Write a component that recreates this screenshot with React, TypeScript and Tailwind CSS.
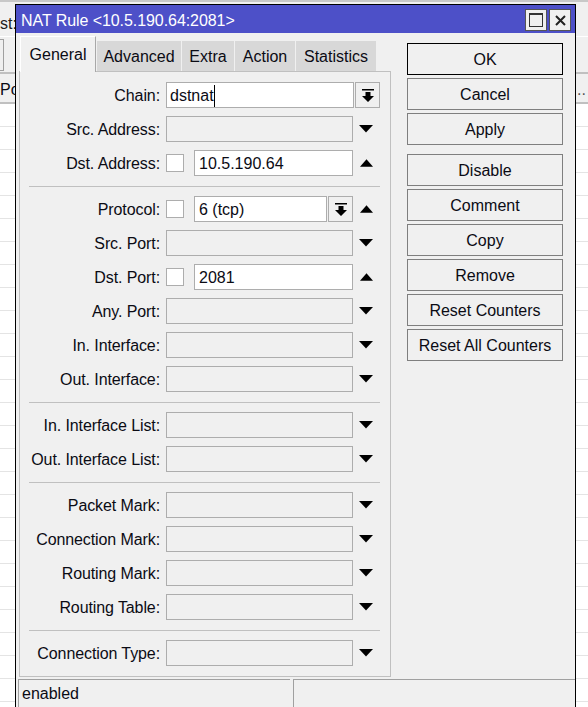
const FONT = "font-['Liberation_Sans',Arial,sans-serif]";

function Down() {
  return (
    <svg width="14" height="8" viewBox="0 0 14 8" className="block">
      <path d="M0 0H14L7 7.5Z" fill="#000" />
    </svg>
  );
}
function Up() {
  return (
    <svg width="14" height="8" viewBox="0 0 14 8" className="block ml-[2px]">
      <path d="M7 0L14 8H0Z" fill="#000" />
    </svg>
  );
}
function DropBtn({ w }: { w: string }) {
  return (
    <div className={`${w} h-[26px] border border-[#adadad] bg-[#f0f0f0] flex items-center justify-center shrink-0`}>
      <svg width="12" height="13" viewBox="0 0 12 13" className="block">
        <path d="M0 0H12V1.5H0Z M3.5 3H8.5V7H12L6 13L0 7H3.5Z" fill="#000" />
      </svg>
    </div>
  );
}

function Label({ text }: { text: string }) {
  return <div className="w-[140px] text-right shrink-0 leading-none pt-[1px] tracking-[-0.1px] whitespace-nowrap">{text}</div>;
}

type RowT = { label: string; check?: boolean; value?: string; up?: boolean };

function Row({ label, check, value, up }: RowT) {
  return (
    <div className="flex h-[26px] items-center">
      <Label text={label} />
      <div className="w-[6px] shrink-0" />
      {check && <div className="w-[18px] h-[18px] border border-[#adadad] bg-white shrink-0 mr-[10px]" />}
      {value !== undefined ? (
        <div className={`${check ? "w-[159px]" : "w-[187px]"} h-[26px] border border-[#adadad] bg-white flex items-center pl-[4px] pt-[2px] shrink-0`}>
          {value}
        </div>
      ) : (
        <div className="w-[187px] h-[26px] border border-[#adadad] bg-[#f0f0f0] shrink-0" />
      )}
      <div className="ml-[5px] w-[15px] flex justify-center shrink-0">{up ? <Up /> : <Down />}</div>
    </div>
  );
}

function Sep() {
  return <div className="h-px bg-[#c0c0c0] ml-[9px] mr-[10px] mt-[10px] mb-[9px]" />;
}

function Btn({ label, primary }: { label: string; primary?: boolean }) {
  return (
    <div className={`h-[32px] border ${primary ? "border-black" : "border-[#7f7f7f]"} bg-[#f0f0f0] flex items-center justify-center pt-[2px]`}>
      {label}
    </div>
  );
}

function Tab({ label, w, active }: { label: string; w: string; active?: boolean }) {
  return active ? (
    <div className={`${w} h-[36px] bg-[#f0f0f0] border-t border-l border-white border-r-[#a8a8a8] flex items-start justify-center pt-[6px] relative z-10 -mb-px border-r`}>
      {label}
    </div>
  ) : (
    <div className={`${w} h-[30px] bg-[#d8d8d8] flex items-center justify-center pt-[2px]`}>{label}</div>
  );
}

const BG_ROWS = Array.from({ length: 27 });

export default function App() {
  return (
    <div className={`${FONT} relative w-[588px] h-[707px] overflow-hidden bg-white text-[16px] text-[#0b0b14]`}>
      <div className="h-[104px] bg-[#f0f0f0] border-t-[2px] border-[#c8c8c8] flex flex-col">
        <div className="h-[36px] border-b border-white flex items-center">
          <span className="pt-[10px] text-[#202020]">st:</span>
        </div>
        <div className="h-[39px] flex items-center">
          <div className="w-[4px] h-[32px] border border-l-0 border-[#a0a0a0] bg-[#f0f0f0]" />
        </div>
        <div className="flex-1 border-t-2 border-b-2 border-[#c0c0c0] flex justify-between items-center pt-[4px]">
          <span>Po</span>
          <span className="mr-[2px] text-[#555]">..</span>
        </div>
      </div>
      <div className="flex flex-col">
        {BG_ROWS.map((_, i) => (
          <div key={i} className="h-[23px] border-b border-[#e4e4e4]" />
        ))}
      </div>

      <div className="absolute left-[15px] top-[4px] w-[561px] h-[720px] border border-black bg-[#f0f0f0]">
        <div className="h-[28px] bg-[#4d50c8] flex items-center justify-between pl-[5px] pr-[4px]">
          <span className="text-white text-[16px] pt-[4px] tracking-[-0.07px]">NAT Rule &lt;10.5.190.64:2081&gt;</span>
          <div className="flex gap-[2px] mt-[2px]">
            <div className="w-[22px] h-[22px] bg-[#f0f0f0] border border-[#555] flex items-center justify-center">
              <div className="w-[14px] h-[14px] border border-[#333] border-t-[2px]" />
            </div>
            <div className="w-[22px] h-[22px] bg-[#f0f0f0] border border-[#555] flex items-center justify-center">
              <svg width="11" height="11" viewBox="0 0 11 11">
                <path d="M1 1L10 10M10 1L1 10" stroke="#222" strokeWidth="2" />
              </svg>
            </div>
          </div>
        </div>

        <div className="flex pl-[3px] pr-[12px]">
          <div className="w-[372px] shrink-0">
            <div className="flex items-end gap-[1px] pl-[1px] h-[38px] pr-[4px]">
              <Tab label="General" w="w-[76px]" active />
              <Tab label="Advanced" w="w-[84px]" />
              <Tab label="Extra" w="w-[52px]" />
              <Tab label="Action" w="w-[60px]" />
              <Tab label="Statistics" w="w-[80px]" />
            </div>
            <div className="h-[606px] border border-[#c0c0c0] pt-[10px]">
              <div className="flex flex-col">
                <div className="flex h-[26px] items-center">
                  <Label text="Chain:" />
                  <div className="w-[6px] shrink-0" />
                  <div className="w-[188px] h-[26px] border border-[#adadad] bg-white flex items-center pl-[3px] pt-[2px] shrink-0">
                    dstnat<span className="w-px h-[22px] bg-black" />
                  </div>
                  <div className="ml-px"><DropBtn w="w-[25px]" /></div>
                </div>
                <div className="mt-[8px] flex flex-col gap-[8px]">
                  <Row label="Src. Address:" />
                  <Row label="Dst. Address:" check value="10.5.190.64" up />
                </div>
                <Sep />
                <div className="flex flex-col gap-[8px]">
                  <div className="flex h-[26px] items-center">
                    <Label text="Protocol:" />
                    <div className="w-[6px] shrink-0" />
                    <div className="w-[18px] h-[18px] border border-[#adadad] bg-white shrink-0 mr-[10px]" />
                    <div className="w-[133px] h-[26px] border border-[#adadad] bg-white flex items-center pl-[4px] pt-[2px] shrink-0">6 (tcp)</div>
                    <div className="ml-px"><DropBtn w="w-[25px]" /></div>
                    <div className="ml-[5px] w-[15px] flex justify-center shrink-0"><Up /></div>
                  </div>
                  <Row label="Src. Port:" />
                  <Row label="Dst. Port:" check value="2081" up />
                  <Row label="Any. Port:" />
                  <Row label="In. Interface:" />
                  <Row label="Out. Interface:" />
                </div>
                <Sep />
                <div className="flex flex-col gap-[8px]">
                  <Row label="In. Interface List:" />
                  <Row label="Out. Interface List:" />
                </div>
                <Sep />
                <div className="flex flex-col gap-[8px]">
                  <Row label="Packet Mark:" />
                  <Row label="Connection Mark:" />
                  <Row label="Routing Mark:" />
                  <Row label="Routing Table:" />
                </div>
                <Sep />
                <Row label="Connection Type:" />
              </div>
            </div>
          </div>
          <div className="ml-[16px] w-[156px] shrink-0 pt-[10px] flex flex-col gap-[3px]">
            <Btn label="OK" primary />
            <Btn label="Cancel" />
            <Btn label="Apply" />
            <div className="mt-[6px]"><Btn label="Disable" /></div>
            <Btn label="Comment" />
            <Btn label="Copy" />
            <Btn label="Remove" />
            <Btn label="Reset Counters" />
            <Btn label="Reset All Counters" />
          </div>
        </div>

        <div className="flex mt-[2px] ml-[2px] gap-[3px] h-[40px]">
          <div className="w-[272px] border-l border-t border-[#a0a0a0] pl-[3px] pt-[2px]">enabled</div>
          <div className="flex-1 border-l border-t border-[#a0a0a0]" />
        </div>
      </div>
    </div>
  );
}
